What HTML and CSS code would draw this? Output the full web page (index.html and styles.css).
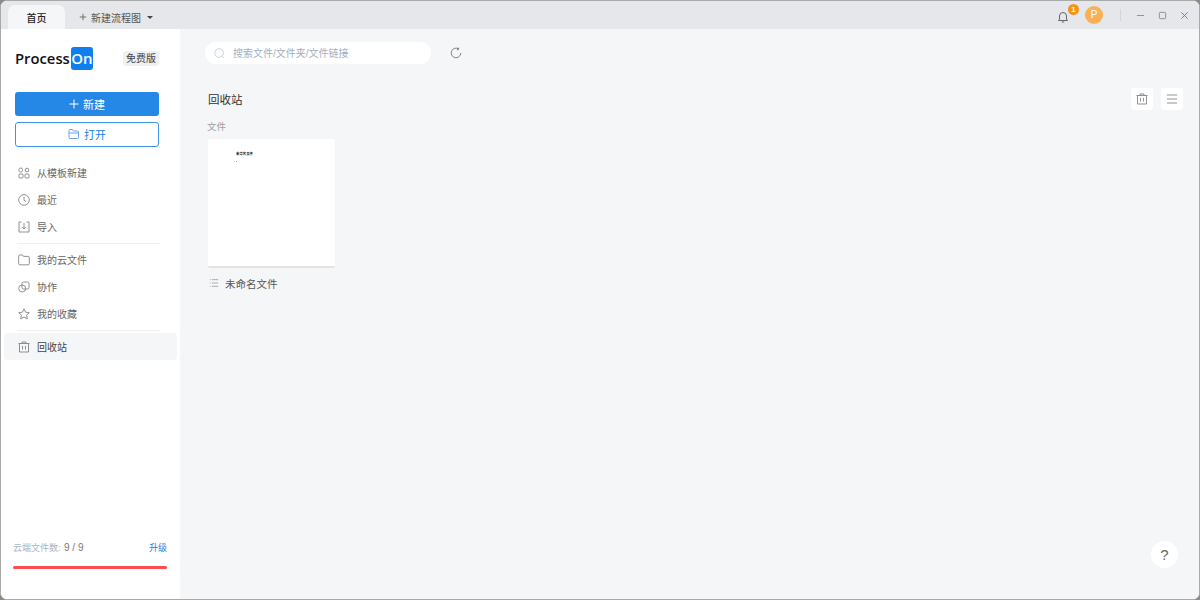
FILE: index.html
```html
<!DOCTYPE html>
<html lang="zh">
<head>
<meta charset="utf-8">
<title>ProcessOn</title>
<link rel="stylesheet" href="styles.css">
</head>
<body>
<div class="window">
  <header class="titlebar">
    <div class="tab">首页</div>
    <div class="newtab">
      <svg class="ic10" viewBox="0 0 10 10"><path d="M5 1v8M1 5h8" stroke="#555" fill="none"/></svg>
      <span>新建流程图</span>
      <span class="caret"></span>
    </div>
    <div class="spacer"></div>
    <div class="bell">
      <svg class="ic12" viewBox="0 0 12 12"><path d="M1.5 9.5h9L9.500 8V5a3.500 3.500 0 0 0-7 0v3zM4.800 11h2.400" stroke="#666" fill="none"/></svg>
      <span class="badge">1</span>
    </div>
    <div class="avatar">P</div>
    <div class="vsep"></div>
    <div class="winbtns">
      <svg class="ic10" viewBox="0 0 10 10"><path d="M1 5h8" stroke="#888" fill="none"/></svg>
      <svg class="ic10" viewBox="0 0 10 10"><rect x="1.500" y="1.500" width="7" height="7" rx="1" stroke="#888" fill="none"/></svg>
      <svg class="ic10" viewBox="0 0 10 10"><path d="M1.500 1.500l7 7M8.500 1.500l-7 7" stroke="#777" fill="none"/></svg>
    </div>
  </header>
  <div class="body">
    <aside class="sidebar">
      <div class="brand">
        <div class="logo"><span class="logo-text">Process</span><span class="logo-on">On</span></div>
        <span class="plan">免费版</span>
      </div>
      <div class="actions">
        <button class="btn primary">
          <svg class="ic10" viewBox="0 0 10 10"><path d="M5 .5v9M.5 5h9" stroke="#fff" fill="none"/></svg>新建
        </button>
        <button class="btn outline">
          <svg class="ic12" viewBox="0 0 12 12"><path d="M1 9.500v-7a1 1 0 0 1 1-1h2.500l1 1.500h4a1 1 0 0 1 1 1v5.500a1 1 0 0 1-1 1H2a1 1 0 0 1-1-1zM1 5h10" stroke="#6fa5e8" fill="none"/></svg>打开
        </button>
      </div>
      <nav class="nav">
        <a class="item"><svg class="navic" viewBox="0 0 12 12"><rect x="1" y="1" width="3.500" height="4" rx="1.500"/><circle cx="9" cy="3" r="1.800"/><rect x="1" y="7" width="4" height="4" rx="1"/><rect x="7" y="7" width="4" height="4" rx="1"/></svg>从模板新建</a>
        <a class="item"><svg class="navic" viewBox="0 0 12 12"><circle cx="6" cy="6" r="5.300"/><path d="M6 3v3.200l2 1.300"/></svg>最近</a>
        <a class="item"><svg class="navic" viewBox="0 0 12 12"><path d="M3.500 1H1v10h10V1H8.500M6 2v6M4 6.200L6 8l2-1.800"/></svg>导入</a>
        <div class="sep"></div>
        <a class="item"><svg class="navic" viewBox="0 0 12 12"><path d="M.7 9.800V2a1 1 0 0 1 1-1h2.800l1 1.400h4.800a1 1 0 0 1 1 1v6.400a1 1 0 0 1-1 1H1.700a1 1 0 0 1-1-1z"/></svg>我的云文件</a>
        <a class="item"><svg class="navic" viewBox="0 0 12 12"><rect x="4" y="1" width="7" height="7" rx="1.500"/><circle cx="4.200" cy="7.500" r="3.500"/></svg>协作</a>
        <a class="item"><svg class="navic" viewBox="0 0 12 12"><path d="M6 .8l1.600 3.400 3.700.5-2.700 2.500.7 3.700L6 9.100l-3.300 1.800.7-3.700L.7 4.700l3.700-.5z"/></svg>我的收藏</a>
        <div class="sep"></div>
        <a class="item active"><svg class="navic" viewBox="0 0 12 12"><path d="M.5 2.500h11M4 2.500V1h4v1.500M1.500 2.500V11h9V2.500M4.500 5v3.500M7.500 5v3.500"/></svg>回收站</a>
      </nav>
      <div class="quota">
        <div class="quota-row">
          <span class="quota-label">云端文件数: <span class="quota-num">9 / 9</span></span>
          <a class="upgrade">升级</a>
        </div>
        <div class="bar"></div>
      </div>
    </aside>
    <main class="main">
      <div class="searchrow">
        <div class="search">
          <svg class="searchic" viewBox="0 0 12 12"><circle cx="5.500" cy="5.500" r="4.700"/><path d="M9 9l2 2"/></svg>
          <span class="search-text">搜索文件/文件夹/文件链接</span>
        </div>
        <svg class="refresh" viewBox="0 0 12 12"><path d="M10.800 6a4.800 4.800 0 1 1-2.400-4.200M8.300.5l.4 1.800-1.800.5"/></svg>
      </div>
      <div class="headrow">
        <h1 class="title">回收站</h1>
        <div class="tools">
          <span class="tool"><svg class="navic" viewBox="0 0 12 12"><path d="M.5 2.500h11M4 2.500V1h4v1.500M1.500 2.500V11h9V2.500M4.500 5v3.500M7.500 5v3.500"/></svg></span>
          <span class="tool"><svg class="navic" viewBox="0 0 12 12"><path d="M1 2h10M1 6h10M1 10h10"/></svg></span>
        </div>
      </div>
      <div class="section">文件</div>
      <div class="file">
        <div class="thumb">
          <div class="thumb-title">未命名文件</div>
          <div class="thumb-dot"></div>
        </div>
        <div class="filename">
          <svg class="listic" viewBox="0 0 12 12"><path d="M3.500 2H11M3.500 6H11M3.500 10H11M1 2h1M1 6h1M1 10h1"/></svg>
          未命名文件
        </div>
      </div>
      <div class="help">?</div>
    </main>
  </div>
</div>
</body>
</html>
```
FILE: styles.css
```css
* { box-sizing: border-box; }
html, body { margin: 0; height: 100%; background: #8a8a86; overflow: hidden; }
body { font-family: "Liberation Sans", "Noto Sans CJK SC", sans-serif; }
svg { display: block; flex: none; }
.window {
  height: 600px; display: flex; flex-direction: column;
  border: 1px solid #a9a9a9; border-radius: 7px; overflow: hidden;
  background: #fff; color: #555;
}
.ic10 { width: 10px; height: 10px; }
.ic12 { width: 12px; height: 12px; }
.titlebar {
  height: 28px; flex: none; background: #e5e7ea; display: flex; align-items: flex-end;
  padding: 0 10px 0 7px; font-size: 10px;
}
.tab {
  width: 57px; height: 24px; background: #f5f6f8; border-radius: 7px 7px 0 0;
  display: flex; align-items: center; justify-content: center; color: #222; font-weight: 500;
}
.newtab { height: 24px; display: flex; align-items: center; margin-left: 14px; gap: 4px; color: #555; }
.newtab .ic10 { width: 8px; height: 8px; }
.caret { border: 3px solid transparent; border-top: 3.500px solid #444; border-bottom: 0; margin-left: 2px; }
.spacer { flex: 1; }
.bell { position: relative; align-self: center; margin: 4px 16px 0 0; }
.badge {
  position: absolute; left: 11px; top: -7px; width: 11px; height: 11px; border-radius: 50%;
  background: #f59312; color: #fff; font-size: 8px; font-weight: 700; line-height: 11px; text-align: center;
}
.avatar {
  width: 18px; height: 18px; border-radius: 50%; background: #fbb057; color: #fff; align-self: center;
  font-size: 10px; line-height: 18px; text-align: center;
}
.vsep { width: 1px; height: 12px; background: #d2d5d9; align-self: center; margin: 0 15px 0 17px; }
.winbtns { display: flex; align-self: center; gap: 13px; }
.winbtns svg { width: 9px; height: 9px; }
.body { flex: 1; min-height: 0; display: flex; }
.sidebar { width: 179px; flex: none; background: #fff; display: flex; flex-direction: column; padding: 0 3px 0 3px; }
.brand { display: flex; align-items: center; justify-content: space-between; height: 32px; margin: 13px 18px 0 11px; }
.logo { display: flex; align-items: center; }
.logo-text { font-size: 14.800px; color: #111; font-family: "Open Sans", sans-serif; font-weight: 600; }
.logo-on {
  background: #0f7eee; color: #fff; font-size: 15px; font-family: "Open Sans", sans-serif; font-weight: 600;
  border-radius: 3px; width: 22px; height: 23px; line-height: 23px; text-align: center; margin-left: 1px;
}
.plan { background: #eef0f3; color: #444; font-size: 10px; height: 15px; line-height: 15px; padding: 0 3px; border-radius: 3px; }
.actions { display: flex; flex-direction: column; gap: 6px; margin: 18px 18px 0 11px; }
.btn {
  height: 25px; border-radius: 3px; font: inherit; font-size: 11px; display: flex; align-items: center;
  justify-content: center; gap: 4px; padding: 0;
}
.primary { height: 24px; background: #2688e6; border: 0; color: #fff; }
.outline { background: #fff; border: 1px solid #3d95ea; color: #1b7fe0; padding-bottom: 1px; }
.nav { margin-top: 12px; display: flex; flex-direction: column; }
.item {
  display: flex; align-items: center; height: 27px; padding-left: 14px; gap: 7px;
  font-size: 10px; color: #666; border-radius: 4px;
}
.item.active { background: #f5f6f8; color: #444; }
.navic { width: 12px; height: 12px; fill: none; stroke: #777; stroke-width: .8; }
.sep { height: 1px; background: #eef0f3; margin: 3px 17px 2px 13px; }
.quota { margin-top: auto; padding: 0 10px 30px 9px; }
.quota-row { display: flex; justify-content: space-between; align-items: center; font-size: 9px; }
.quota-label { color: #a8b4c4; }
.quota-num { color: #777; font-size: 10px; margin-left: 1px; }
.upgrade { color: #1b7fe0; font-size: 9px; }
.bar { height: 3px; border-radius: 2px; background: #ff4d4f; margin-top: 12px; }
.main { flex: 1; min-width: 0; position: relative; background: #f5f6f8; padding: 13px 16px 0 28px; }
.searchrow { display: flex; align-items: center; gap: 19px; margin-left: -3px; }
.search {
  width: 226px; height: 22px; border-radius: 11px; background: #fff; display: flex; align-items: center;
  padding-left: 9px; gap: 8px; font-size: 10px; color: #a4aec0;
}
.search-text { padding-bottom: 2px; }
.searchic { width: 11px; height: 11px; fill: none; stroke: #b8c4d2; stroke-width: .8; }
.refresh { width: 12px; height: 12px; fill: none; stroke: #777; stroke-width: .9; }
.headrow { display: flex; align-items: center; justify-content: space-between; margin-top: 24px; height: 22px; }
.title { margin: 0; font-size: 11.500px; font-weight: 400; color: #333; }
.tools { display: flex; gap: 8px; }
.tool { width: 22px; height: 22px; background: #fff; border-radius: 3px; display: flex; align-items: center; justify-content: center; }
.section { font-size: 9.500px; color: #a0a0a0; margin: 10px 0 0 -1px; height: 14px; line-height: 14px; }
.file { width: 127px; margin-top: 5px; }
.thumb {
  height: 129px; background: #fff; border-radius: 2px; border-bottom: 2px solid #e2e3e5;
  padding: 13px 0 0 28px;
}
.thumb-title { font-size: 3.400px; line-height: 5px; color: #222; font-weight: 700; }
.thumb-dot { width: 1px; height: 1px; background: #999; margin-top: 4px; }
.filename { display: flex; align-items: center; gap: 6px; margin-top: 8px; padding-left: 1px; font-size: 10.500px; color: #555; height: 14px; white-space: nowrap; }
.listic { width: 10px; height: 10px; fill: none; stroke: #888; stroke-width: .8; }
.help {
  position: absolute; right: 21px; bottom: 31px; width: 27px; height: 27px; border-radius: 50%;
  background: #fff; color: #666; font-size: 15px; line-height: 27px; text-align: center;
}
```
